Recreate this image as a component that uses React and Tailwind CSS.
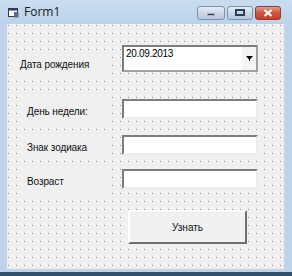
import React from "react";

const dots =
  "bg-[#f0f0f0] bg-[radial-gradient(circle_at_1.5px_1.5px,#8c8c8c_0.75px,transparent_0.9px)] bg-[length:8px_8px]";

const FormIcon = () => (
  <svg width="11" height="11" viewBox="0 0 11 11" className="shrink-0">
    <rect x="0.5" y="1.5" width="9" height="8" fill="#ffffff" stroke="#3b3b3b" />
    <rect x="0.5" y="1.5" width="9" height="2" fill="#2c3e63" />
    <path d="M6 5 L10.5 5 L10.5 10.5 L6 10.5 Z" fill="#5a6c8c" />
  </svg>
);

const TitleButton = ({ kind, width }) => {
  const close = kind === "close";
  return (
    <div
      className={`h-[14px] rounded-[3px] border flex items-center justify-center ${width} ${
        close
          ? "border-[#8e3b33] bg-gradient-to-b from-[#e89a86] via-[#d0533d] to-[#c2402f]"
          : "border-[#7f91a9] bg-gradient-to-b from-[#e7eef7] via-[#c9d7e8] to-[#b7c9df]"
      }`}
    >
      {kind === "min" && <div className="w-[8px] h-[3px] bg-[#2d3f57] mt-[4px] border border-white/60" />}
      {kind === "max" && <div className="w-[10px] h-[7px] border-2 border-[#2d3f57] bg-transparent" />}
      {close && (
        <svg width="10" height="8" viewBox="0 0 10 8">
          <path d="M1.5 1 L8.5 7 M8.5 1 L1.5 7" stroke="#ffffff" strokeWidth="2.2" />
        </svg>
      )}
    </div>
  );
};

const Label = ({ text, className }) => (
  <div className={`h-[28px] bg-[#f0f0f0] flex items-center text-[10px] tracking-[-0.1px] text-[#111] ${className}`}>
    {text}
  </div>
);

const TextBox = ({ className }) => (
  <div
    className={`w-[136px] h-[20px] bg-white border-2 border-t-[#7d7d7d] border-l-[#7d7d7d] border-r-[#ececec] border-b-[#ececec] ${className}`}
  />
);

export default function App() {
  return (
    <div className="w-[292px] h-[276px] flex flex-col bg-[#bfd4eb] font-['Liberation_Sans',Arial,sans-serif] overflow-hidden">
      {/* title bar */}
      <div className="h-[24px] flex items-center pl-[8px] pr-[11px] bg-gradient-to-b from-[#cadcf0] to-[#bcd2ea]">
        <FormIcon />
        <span className="ml-[5px] text-[12px] text-[#1b1b1b] font-['Open_Sans',sans-serif]">Form1</span>
        <div className="flex-1" />
        <div className="flex gap-[2px] mt-[1px]">
          <TitleButton kind="min" width="w-[28px]" />
          <TitleButton kind="max" width="w-[26px]" />
          <TitleButton kind="close" width="w-[26px]" />
        </div>
      </div>

      <div className="flex h-[245px]">
        <div className="w-[7px]" />
        <div className={`w-[277px] h-[245px] ${dots} flex flex-col`}>
          {/* row 1 */}
          <div className="flex items-start mt-[21px]">
            <Label text="Дата рождения" className="ml-[7px] w-[96px] mt-[5px] pl-[6px]" />
            <div className="ml-[12px] w-[136px] h-[27px] bg-white flex border-2 border-t-[#7d7d7d] border-l-[#7d7d7d] border-r-[#a0a0a0] border-b-[#a0a0a0]">
              <span className="flex-1 pl-[2px] pt-[1px] text-[10px] leading-[12px] tracking-[-0.3px] text-black">
                20.09.2013
              </span>
              <div className="w-[14px] h-full bg-[#f4f4f4] flex flex-col items-center pt-[9px]">
                <svg width="7" height="5" viewBox="0 0 7 5">
                  <path d="M0 0 L7 0 L3.5 4 Z" fill="#000" />
                  <rect x="3" y="3" width="1" height="2" fill="#000" />
                </svg>
              </div>
            </div>
          </div>

          {/* row 2 */}
          <div className="flex items-start mt-[19px]">
            <Label text="День недели:" className="ml-[15px] w-[88px] pl-[5px] pt-[1px]" />
            <TextBox className="ml-[12px] mt-[2px]" />
          </div>

          {/* row 3 */}
          <div className="flex items-start mt-[8px]">
            <Label text="Знак зодиака" className="ml-[15px] w-[88px] pl-[5px] pt-[1px]" />
            <TextBox className="ml-[12px] mt-[2px]" />
          </div>

          {/* row 4 */}
          <div className="flex items-start mt-[6px]">
            <Label text="Возраст" className="ml-[15px] w-[88px] pl-[5px] pt-[1px]" />
            <TextBox className="ml-[12px] mt-[2px]" />
          </div>

          {/* button */}
          <div className="flex mt-[15px]">
            <div className="ml-[121px] w-[119px] h-[34px] bg-[#f0f0f0] border-2 border-t-white border-l-white border-r-[#6f6f6f] border-b-[#6f6f6f] flex items-center justify-center text-[10px] text-[#111]">
              Узнать
            </div>
          </div>
        </div>
      </div>

      <div className="h-[3px]" />
      <div className="h-[4px] bg-[#35506f]" />
    </div>
  );
}
